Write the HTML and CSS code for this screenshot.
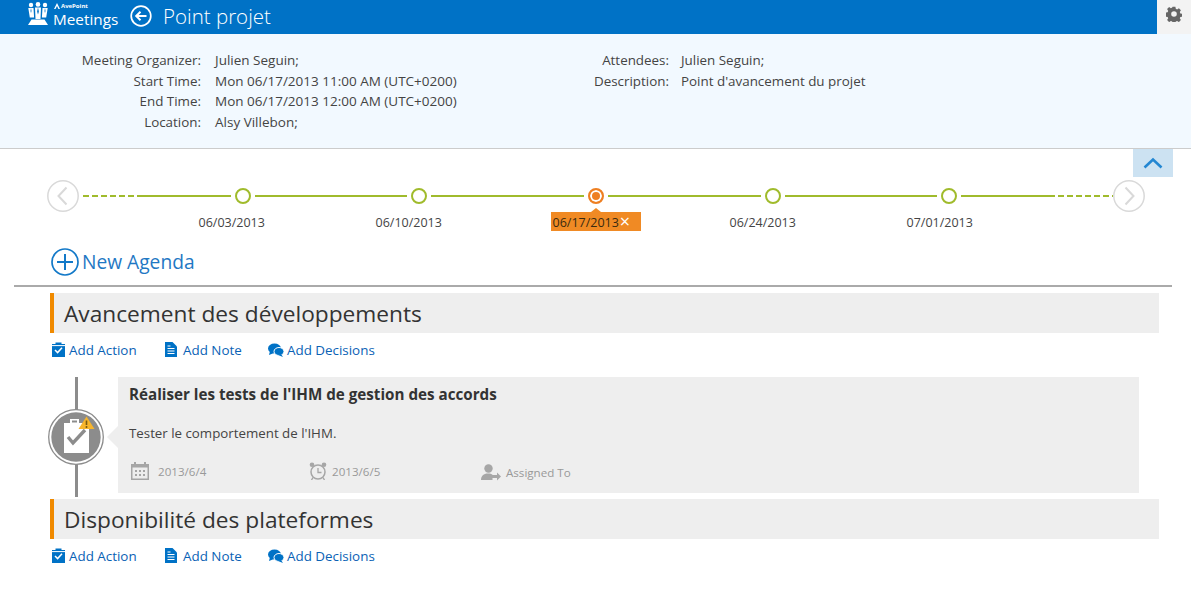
FILE: index.html
```html
<!DOCTYPE html>
<html lang="en">
<head>
<meta charset="utf-8">
<title>Point projet</title>
<link rel="stylesheet" href="styles.css">
</head>
<body>
<header class="topbar">
  <svg class="logo-people" viewBox="0 0 20 23" width="20" height="23"><g fill="#fff"><circle cx="3" cy="3" r="2.200"/><circle cx="10" cy="2.400" r="2.300"/><circle cx="17" cy="3" r="2.200"/><path d="M.3 6h5.200l.6 9.500H1.800zM7 5.500h6l-.5 11.500h-5zM14.500 6h5.200l-1.500 9.500h-4.300z"/><path d="M3.500 17.500h13l3.500 5.500H0z"/></g><path d="M10 5.500l-.9 4 .9 3 .9-3zM3 6l-.5 3 .5 2 .5-2zM17 6l-.5 3 .5 2 .5-2z" fill="#0072c6"/></svg>
  <div class="brand">
    <span class="brand-top"><svg viewBox="0 0 6 6" width="6" height="6"><path d="M0 6L3 0l3 6H4.500L3 3 1.500 6z" fill="#fff"/></svg>AvePoint</span>
    <span class="brand-name">Meetings</span>
  </div>
  <svg class="back" viewBox="0 0 22 22" width="22" height="22"><circle cx="11" cy="11" r="9.800" fill="none" stroke="#fff" stroke-width="1.700"/><path d="M16.500 11H6.500M10.500 6.800L6.200 11l4.300 4.200" fill="none" stroke="#fff" stroke-width="2"/></svg>
  <h1 class="page-title">Point projet</h1>
  <button class="gear" aria-label="Settings"><svg viewBox="0 0 16 16" width="16" height="16"><path fill="#666" fill-rule="evenodd" d="M6.600.8h2.800l.4 2 1.300.6 1.800-1.100 2 2-1.100 1.800.6 1.300 2 .4v2.800l-2 .4-.6 1.300 1.100 1.800-2 2-1.800-1.100-1.300.6-.4 2H6.600l-.4-2-1.300-.6-1.800 1.100-2-2 1.100-1.800-.6-1.300-2-.4V6.600l2-.4.6-1.300-1.100-1.800 2-2 1.800 1.100 1.300-.6zM8 5.200a2.800 2.800 0 1 0 0 5.600 2.800 2.800 0 0 0 0-5.600z"/></svg></button>
</header>

<section class="info">
  <span class="lbl">Meeting Organizer:</span><span class="val">Julien Seguin;</span><span class="lbl">Attendees:</span><span class="val2">Julien Seguin;</span>
  <span class="lbl">Start Time:</span><span class="val">Mon 06/17/2013 11:00 AM (UTC+0200)</span><span class="lbl">Description:</span><span class="val2">Point d'avancement du projet</span>
  <span class="lbl">End Time:</span><span class="val">Mon 06/17/2013 12:00 AM (UTC+0200)</span><span></span><span></span>
  <span class="lbl">Location:</span><span class="val">Alsy Villebon;</span><span></span><span></span>
</section>

<div class="collapse-row"><button class="collapse" aria-label="Collapse"><svg viewBox="0 0 20 12" width="20" height="12"><path d="M1.500 10.500L10 2.500l8.500 8" fill="none" stroke="#2487d2" stroke-width="2.600"/></svg></button></div>

<section class="timeline">
  <div class="track">
    <span class="nav"><svg viewBox="0 0 32 32" width="32" height="32"><circle cx="16" cy="16" r="15.200" fill="#fff" stroke="#d9d9d9" stroke-width="1.500"/><path d="M19.500 7.500L11.500 16l8 8.500" fill="none" stroke="#d9d9d9" stroke-width="2"/></svg></span>
    <span class="dash"></span><span class="seg end"></span>
    <span class="node"></span><span class="seg"></span>
    <span class="node"></span><span class="seg"></span>
    <span class="node current"></span><span class="seg"></span>
    <span class="node"></span><span class="seg"></span>
    <span class="node"></span><span class="seg end"></span><span class="dash right"></span>
    <span class="nav"><svg viewBox="0 0 32 32" width="32" height="32"><circle cx="16" cy="16" r="15.200" fill="#fff" stroke="#d9d9d9" stroke-width="1.500"/><path d="M12.500 7.500L20.500 16l-8 8.500" fill="none" stroke="#d9d9d9" stroke-width="2"/></svg></span>
  </div>
  <div class="dates">
    <span class="date">06/03/2013</span>
    <span class="date">06/10/2013</span>
    <span class="date selected">06/17/2013<span class="close">×</span></span>
    <span class="date">06/24/2013</span>
    <span class="date">07/01/2013</span>
  </div>
</section>

<div class="new-agenda">
  <svg viewBox="0 0 28 28" width="28" height="28"><circle cx="14" cy="14" r="13" fill="none" stroke="#1379c8" stroke-width="1.700"/><path d="M14 6v16M6 14h16" stroke="#1379c8" stroke-width="2"/></svg>
  <span class="new-agenda-text">New Agenda</span>
</div>

<section class="agenda">
  <h2 class="agenda-head">Avancement des développements</h2>
  <div class="actions">
    <span class="action"><svg viewBox="0 0 13 15" width="13" height="15"><path fill="#0072c6" d="M0 2h3.500V.500h6V2H13v13H0z"/><path d="M3 8l2.600 2.600L10 5.800" fill="none" stroke="#fff" stroke-width="1.500"/><path d="M0 3.600h13" stroke="#fff"/></svg>Add Action</span>
    <span class="action note"><svg viewBox="0 0 12 15" width="12" height="15"><path fill="#0072c6" d="M0 0h7.500L12 4.500V15H0z"/><path d="M2.500 6.500h7M2.500 9h7M2.500 11.500h7M2.500 4h3" stroke="#fff"/></svg>Add Note</span>
    <span class="action dec"><svg viewBox="0 0 16 14" width="16" height="14"><ellipse cx="6.500" cy="5.500" rx="6.500" ry="5" fill="#0072c6"/><path d="M2 8L1 12l5-2z" fill="#0072c6"/><ellipse cx="11" cy="8.500" rx="5" ry="4" fill="#0072c6" stroke="#fff"/><path d="M13 11l2 3-5-2z" fill="#0072c6"/></svg>Add Decisions</span>
  </div>
  <div class="items">
    <div class="rail">
      <span class="badge">
        <svg viewBox="0 0 56 56" width="56" height="56"><circle cx="28" cy="28" r="27.300" fill="#fff" stroke="#8c8c8c" stroke-width="1.300"/><circle cx="28" cy="28" r="24.700" fill="#8c8c8c"/><path fill="#fff" d="M16 14h6v-4h9v4h10v30H16z"/><path d="M20 28l5 6 12-13" fill="none" stroke="#8c8c8c" stroke-width="3.400"/><path d="M24 12.500h5" stroke="#8c8c8c" stroke-width="2"/><path fill="#f7b52c" d="M38.500 7.500L46.500 20h-16z"/><path d="M38.500 11.500v4.500M38.500 17v2" stroke="#7a5a10" stroke-width="1.600"/></svg>
      </span>
    </div>
    <article class="card">
      <h3 class="card-title">Réaliser les tests de l'IHM de gestion des accords</h3>
      <p class="card-text">Tester le comportement de l'IHM.</p>
      <div class="meta">
        <span class="meta-item start"><svg viewBox="0 0 18 18" width="18" height="18"><path fill="#a6a6a6" d="M0 2h3V0h2v2h8V0h2v2h3v16H0z"/><path fill="#eee" d="M1.500 5.500h15v11h-15z"/><path d="M4 8h2v2H4zM8 8h2v2H8zM12 8h2v2h-2zM4 12h2v2H4zM8 12h2v2H8zM12 12h2v2h-2z" fill="#a6a6a6"/></svg>2013/6/4</span>
        <span class="meta-item due"><svg viewBox="0 0 18 18" width="18" height="18"><circle cx="9" cy="10" r="7" fill="none" stroke="#a6a6a6" stroke-width="1.500"/><path d="M9 6v4.500h3.500" fill="none" stroke="#a6a6a6" stroke-width="1.300"/><circle cx="3" cy="2.800" r="2.300" fill="#a6a6a6"/><circle cx="15" cy="2.800" r="2.300" fill="#a6a6a6"/><path d="M4 15.500L2.500 18M14 15.500l1.500 2.500" stroke="#a6a6a6" stroke-width="1.400"/></svg>2013/6/5</span>
        <span class="meta-item owner"><svg viewBox="0 0 20 17" width="20" height="17"><circle cx="7.500" cy="4.500" r="4.200" fill="#a6a6a6"/><path fill="#a6a6a6" d="M0 16c0-4 2.500-6.500 7-6.500 2 0 3.500.4 4.500 1.300V16z"/><path fill="#a6a6a6" d="M11 11h5V8.500l4 4-4 4V14h-5z"/></svg>Assigned To</span>
      </div>
    </article>
  </div>
</section>

<section class="agenda">
  <h2 class="agenda-head">Disponibilité des plateformes</h2>
  <div class="actions">
    <span class="action"><svg viewBox="0 0 13 15" width="13" height="15"><path fill="#0072c6" d="M0 2h3.500V.500h6V2H13v13H0z"/><path d="M3 8l2.600 2.600L10 5.800" fill="none" stroke="#fff" stroke-width="1.500"/><path d="M0 3.600h13" stroke="#fff"/></svg>Add Action</span>
    <span class="action note"><svg viewBox="0 0 12 15" width="12" height="15"><path fill="#0072c6" d="M0 0h7.500L12 4.500V15H0z"/><path d="M2.500 6.500h7M2.500 9h7M2.500 11.500h7M2.500 4h3" stroke="#fff"/></svg>Add Note</span>
    <span class="action dec"><svg viewBox="0 0 16 14" width="16" height="14"><ellipse cx="6.500" cy="5.500" rx="6.500" ry="5" fill="#0072c6"/><path d="M2 8L1 12l5-2z" fill="#0072c6"/><ellipse cx="11" cy="8.500" rx="5" ry="4" fill="#0072c6" stroke="#fff"/><path d="M13 11l2 3-5-2z" fill="#0072c6"/></svg>Add Decisions</span>
  </div>
</section>
</body>
</html>
```
FILE: styles.css
```css
* { box-sizing: border-box; }
html, body { margin: 0; padding: 0; }
body {
  height: 592px;
  overflow: hidden;
  background: #fff;
  color: #444;
  font-family: "Open Sans", "Noto Sans", sans-serif;
  font-size: 13.4px;
}
h1, h2, h3, p { margin: 0; font-weight: 400; }
button { border: 0; padding: 0; margin: 0; display: flex; align-items: center; justify-content: center; }

.topbar {
  display: flex;
  align-items: center;
  height: 34px;
  padding-left: 28px;
  background: #0072c6;
  color: #fff;
}
.logo-people { flex: none; margin-top: -7px; }
.brand { display: flex; flex-direction: column; margin: -5px 0 0 5px; width: 66px; }
.brand-top { display: flex; align-items: center; gap: 1px; font-size: 6px; line-height: 7px; font-weight: 700; padding-left: 1px; margin-top: 1px; }
.brand-name { font-size: 15.3px; line-height: 18px; }
.back { flex: none; margin: -2px 0 0 11px; }
.page-title { margin: -3px 0 0 11px; font-size: 20.5px; font-weight: 300; line-height: 32px; flex: 1; }
.gear { width: 34px; height: 34px; background: #f3f3f3; padding-bottom: 6px; }

.info {
  display: grid;
  grid-template-columns: 201px 268px 200px 1fr;
  grid-auto-rows: 20.5px;
  align-items: center;
  height: 115px;
  padding-top: 16px;
  background: #f2f9ff;
  border-bottom: 1px solid #ccc;
  line-height: 20px;
}
.lbl { text-align: right; }
.val { padding-left: 14px; font-size: 13.5px; }
.val2 { padding-left: 12px; }

.collapse-row { display: flex; justify-content: flex-end; padding-right: 18px; height: 28px; }
.collapse { width: 40px; height: 28px; background: #cce2f2; }

.timeline { height: 68px; margin-top: 3px; }
.track { display: flex; align-items: center; height: 32px; padding-left: 47px; }
.nav { flex: none; width: 32px; height: 32px; }
.nav svg { display: block; }
.dash {
  flex: none;
  width: 57px;
  height: 2px;
  margin: 0 1px;
  background: linear-gradient(90deg, #a0bb2c 6px, transparent 6px) 3px 0 / 9px 2px repeat-x;
}
.dash.right {
  width: 55px;
  margin: 0 0 0 4px;
  background-position: 0 0;
}
.seg { flex: none; width: 152.4px; height: 2px; margin: 0 4px; background: #a0bb2c; }
.node.current + .seg { width: 152.8px; }
.seg.end { width: 94px; margin: 0 4px 0 -1px; }
.node + .seg.end { margin: 0 -1px 0 4px; }
.node { flex: none; width: 16px; height: 16px; border: 2px solid #a0bb2c; border-radius: 50%; background: #fff; }
.node.current { border-color: #ee7f22; background: #ee7f22; box-shadow: inset 0 0 0 2px #fff; }

.dates { display: flex; gap: 87px; padding-left: 198.5px; }
.date { flex: none; width: 90px; height: 19px; line-height: 21px; font-size: 12.5px; white-space: nowrap; }
.selected { position: relative; background: #f08a24; color: #3a2a10; padding-left: 1.500px; margin: 0 1.500px 0 -1.500px; }
.selected::before {
  content: "";
  position: absolute;
  left: 40px;
  top: -4px;
  border: 5px solid transparent;
  border-top: 0;
  border-bottom: 4px solid #f08a24;
}
.close { color: #fff; font-size: 18px; line-height: 19px; margin-left: 1px; vertical-align: top; }

.new-agenda {
  display: flex;
  align-items: center;
  gap: 3px;
  height: 28px;
  margin: 0 19px 0 14px;
  padding-left: 37px;
  color: #1f78c4;
  font-size: 19.2px;
  box-sizing: content-box;
  padding-bottom: 9px;
  border-bottom: 2px solid #aaa;
}
.new-agenda-text { margin-top: -2px; }

.agenda { margin: 6px 32px 0 50px; }
.agenda-head {
  height: 40px;
  padding-left: 10px;
  border-left: 4px solid #f08a00;
  background: #eee;
  color: #333;
  font-size: 22.7px;
  line-height: 42px;
}
.actions { display: flex; align-items: center; height: 34px; padding-bottom: 1px; color: #0a62b5; font-size: 13.4px; }
.action { display: flex; align-items: center; gap: 4px; width: 114px; padding-left: 2px; }
.action svg { flex: none; }
.action.note { width: 102px; gap: 6px; padding-left: 1px; }
.action.dec { width: auto; gap: 3px; }

.items { display: flex; margin-top: 10px; height: 120px; margin-bottom: -4px; }
.rail {
  flex: none;
  display: flex;
  align-items: center;
  width: 68px;
  background: linear-gradient(#8c8c8c, #8c8c8c) 25px 0 / 3px 100% no-repeat;
}
.badge { display: block; width: 56px; height: 56px; margin-left: -2px; }
.badge svg { display: block; }
.card {
  position: relative;
  width: 1021px;
  height: 116px;
  padding: 7px 11px;
  background: #eee;
}
.card::before {
  content: "";
  position: absolute;
  left: -11px;
  top: 49px;
  border: 11px solid transparent;
  border-left: 0;
  border-right-color: #eee;
}
.card-title { color: #333; font-size: 15.2px; font-weight: 700; line-height: 21px; }
.card-text { margin-top: 18px; font-size: 13.3px; line-height: 20px; }
.meta { display: flex; align-items: center; margin-top: 16px; color: #999; font-size: 11.6px; height: 24px; }
.meta-item { display: flex; align-items: center; gap: 9px; }
.meta-item.start { width: 178px; padding-left: 2px; }
.meta-item.due { width: 172px; padding-left: 2px; gap: 5px; }
.meta-item.owner { padding-left: 2px; gap: 5px; margin-top: 2px; }
```
